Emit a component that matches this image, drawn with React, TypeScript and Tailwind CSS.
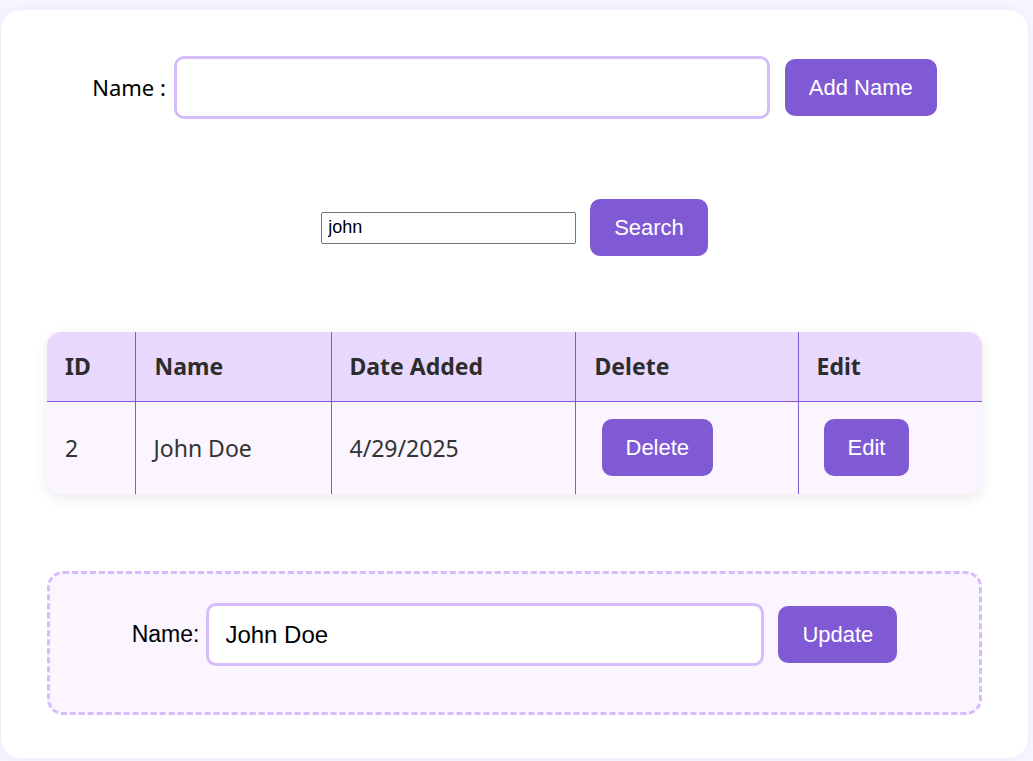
import { useState } from 'react';

const btn =
    'rounded-[10px] bg-[#805ad5] px-6 py-4 text-[22px] leading-[25px] text-white font-["Liberation_Sans",Arial,sans-serif]';

export default function App() {
    const [name, setName] = useState('');
    const [search, setSearch] = useState('john');
    const [edit, setEdit] = useState('John Doe');

    return (
        <div className="min-h-[761px] bg-[#f7f5ff] pt-[10px] pl-[1px] font-['Noto_Sans','Open_Sans',sans-serif] text-[#222]">
            <div className="h-[748px] w-[1027px] rounded-[20px] bg-white pt-[46px] shadow-[0_0_10px_rgba(160,140,230,0.12)]">
                <div className="flex items-center justify-center">
                    <label className="mr-[8px] text-[22px] text-black">Name :</label>
                    <input
                        value={name}
                        onChange={(e) => setName(e.target.value)}
                        className="h-[63px] w-[596px] rounded-[10px] border-[3px] border-[#d6bcfa] bg-white px-4 outline-none"
                    />
                    <button className={`${btn} ml-[15px]`}>Add Name</button>
                </div>

                <div className="mt-[80px] flex items-center justify-center">
                    <input
                        value={search}
                        onChange={(e) => setSearch(e.target.value)}
                        className="h-[32px] w-[255px] rounded-[2px] border border-[#767676] px-[6px] font-['Liberation_Sans',Arial,sans-serif] text-[18px] text-black outline-none"
                    />
                    <button className={`${btn} ml-[14px]`}>Search</button>
                </div>

                <div className="mx-[46px] mt-[76px] overflow-hidden rounded-[14px] bg-[#faf5ff] shadow-[0_4px_14px_rgba(0,0,0,0.09)]">
                    <table className="w-full border-collapse text-left">
                        <thead className="bg-[#e9d8fd]">
                            <tr className="h-[69px] border-b border-[#805ad5] text-[23px] font-bold text-[#2d2d2d]">
                                <th className="w-[88px] px-[18px]">ID</th>
                                <th className="w-[196px] border-l border-[#805ad5] px-[19px]">Name</th>
                                <th className="w-[244px] border-l border-[#805ad5] px-[18px]">Date Added</th>
                                <th className="w-[223px] border-l border-[#805ad5] px-[19px]">Delete</th>
                                <th className="border-l border-[#805ad5] px-[18px]">Edit</th>
                            </tr>
                        </thead>
                        <tbody>
                            <tr className="h-[93px] text-[23px] text-[#333]">
                                <td className="px-[18px]">2</td>
                                <td className="border-l border-[#805ad5] px-[18px]">John Doe</td>
                                <td className="border-l border-[#805ad5] px-[18px]">4/29/2025</td>
                                <td className="border-l border-[#805ad5] pl-[26px]">
                                    <button className={btn}>Delete</button>
                                </td>
                                <td className="border-l border-[#805ad5] pl-[25px]">
                                    <button className={btn}>Edit</button>
                                </td>
                            </tr>
                        </tbody>
                    </table>
                </div>

                <div className="mx-[46px] mt-[77px] flex h-[144px] items-start justify-center rounded-[16px] border-[3px] border-dashed border-[#d6bcfa] bg-[#faf5ff] pt-[29px]">
                    <div className="flex items-center font-['Liberation_Sans',Arial,sans-serif]">
                        <label className="mr-[7px] text-[23px] text-black">Name:</label>
                        <input
                            value={edit}
                            onChange={(e) => setEdit(e.target.value)}
                            className="h-[63px] w-[558px] rounded-[10px] border-[3px] border-[#d6bcfa] bg-white px-4 text-[24px] text-black outline-none"
                        />
                        <button className={`${btn} ml-[14px]`}>Update</button>
                    </div>
                </div>
            </div>
        </div>
    );
}
